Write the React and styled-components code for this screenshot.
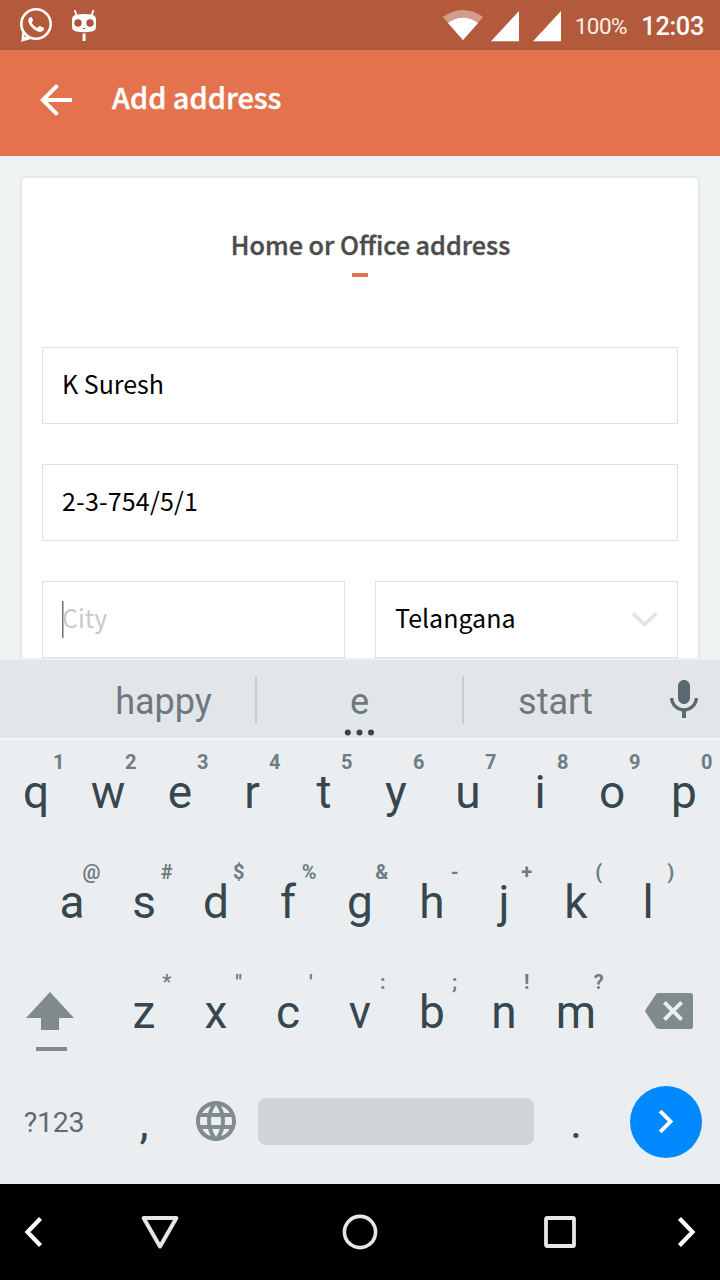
import React from "react";
import styled, { createGlobalStyle } from "styled-components";

const GlobalStyle = createGlobalStyle`
  * { box-sizing: border-box; }
  html, body { margin: 0; padding: 0; }
  body { width: 720px; height: 1280px; overflow: hidden; font-family: Roboto, sans-serif; }
  svg { display: block; flex: none; }
`;

const Screen = styled.div`
  display: flex;
  flex-direction: column;
  width: 720px;
  height: 1280px;
  overflow: hidden;
  background: #eff3f4;
`;

const StatusBar = styled.div`
  display: flex;
  align-items: center;
  justify-content: space-between;
  height: 50px;
  flex: none;
  padding: 0 16px 0 16px;
  background: #b45a3c;
  color: #fff;
`;

const StatusGroup = styled.div`
  display: flex;
  align-items: center;
  gap: ${(p) => p.$gap || 0}px;
`;

const Battery = styled.span`
  margin-left: 13px;
  font-size: 22.5px;
  line-height: 50px;
  padding-top: 1px;
  letter-spacing: -0.6px;
  color: #fbeeea;
`;

const Clock = styled.span`
  margin-left: 14.5px;
  font-size: 25.3px;
  font-weight: 500;
  line-height: 50px;
  padding-top: 3px;
  letter-spacing: -0.3px;
`;

const AppBar = styled.header`
  display: flex;
  align-items: center;
  gap: 32px;
  height: 106px;
  flex: none;
  padding: 0 32px 6px;
  background: #e3724d;
`;

const Title = styled.h1`
  margin: 0;
  padding-bottom: 9px;
  font: 500 28.9px/60px "Noto Sans CJK SC", "Source Sans Pro", sans-serif;
  -webkit-text-stroke: 0.4px currentColor;
  color: #fff;
`;

const Content = styled.main`
  height: 502px;
  flex: none;
  overflow: hidden;
  padding: 20px 20px 0;
`;

const Card = styled.section`
  height: 560px;
  padding: 0 20px;
  border: 2px solid #e4e8e9;
  border-radius: 5px;
  background: #fff;
`;

const CardHeading = styled.h2`
  margin: 0;
  padding: 44px 0 1px 21px;
  text-align: center;
  font: 500 25.2px/44px "Noto Sans CJK SC", "Source Sans Pro", sans-serif;
  -webkit-text-stroke: 0.4px currentColor;
  color: #4c4c4c;
`;

const Accent = styled.div`
  width: 16px;
  height: 4px;
  margin: 6px auto 70px;
  background: #e3724d;
`;

const Form = styled.div`
  display: grid;
  grid-template-columns: 1fr 1fr;
  gap: 40px 30px;
`;

const Field = styled.div`
  grid-column: ${(p) => (p.$half ? "auto" : "1 / -1")};
  display: flex;
  align-items: center;
  justify-content: space-between;
  height: 77px;
  padding: 0 20px 0 19px;
  border: 1px solid #dedfe0;
  background: #fff;
  font: 400 25px/70px "Noto Sans CJK SC", "Source Sans Pro", sans-serif;
  color: ${(p) => (p.$placeholder ? "#c9c9c9" : "#000")};
`;

const FieldText = styled.span`
  padding-bottom: 5px;
  letter-spacing: ${(p) => (p.$digits ? "0.17px" : "0")};
`;

const Caret = styled.i`
  width: 2px;
  height: 37px;
  margin-right: -2px;
  background: linear-gradient(90deg, #707476 50%, #b4b6b7 50%);
`;

const InputLine = styled.div`
  display: flex;
  align-items: center;
`;

const Keyboard = styled.section`
  height: 526px;
  flex: none;
  background: #ebeef1;
  color: #37474f;
`;

const Suggestions = styled.div`
  display: grid;
  grid-template-columns: 73px 184px 207px 184px 72px;
  align-items: center;
  height: 82px;
  border-top: 2px solid #edf0f2;
  border-bottom: 2px solid #f2f6f8;
  background: #e2e6e9;
`;

const Suggestion = styled.div`
  position: relative;
  height: 48px;
  margin-top: 2px;
  padding: 5px ${(p) => (p.$center ? 0 : 1)}px 0 0;
  border-right: ${(p) => (p.$last ? "0" : "2px solid #c9cdd0")};
  text-align: center;
  font-size: 36px;
  line-height: 42px;
  color: #6d797f;
`;

const More = styled.svg`
  position: absolute;
  left: 86px;
  top: 53px;
`;

const MicSlot = styled.div`
  padding: 2px 0 0 11.5px;
`;

const KeyRow = styled.div`
  display: flex;
  height: 110px;
  padding: 0 ${(p) => p.$inset || 0}px;
`;

const Key = styled.div`
  position: relative;
  width: 72px;
  text-align: center;
  font-size: 46px;
  line-height: 105px;
`;

const Hint = styled.span`
  position: absolute;
  top: 12px;
  right: 7.5px;
  min-width: 11.5px;
  text-align: center;
  font-size: 20px;
  font-weight: 700;
  line-height: 20px;
  color: #6f7c82;
`;

const SideKey = styled.div`
  width: 108px;
  padding: ${(p) => p.$pad};
`;

const BottomRow = styled.div`
  display: flex;
  align-items: center;
  height: 104px;
  padding-bottom: 1px;
`;

const SymbolsKey = styled.div`
  width: 108px;
  padding-top: 3px;
  text-align: center;
  font-size: 28.5px;
  line-height: 104px;
  letter-spacing: -0.2px;
  color: #5c6c73;
`;

const Punctuation = styled.div`
  width: ${(p) => p.$w}px;
  text-align: center;
  font-size: 46px;
  line-height: 80px;
`;

const GlobeSlot = styled.div`
  width: 78px;
  padding: 0 0 1px 11.5px;
`;

const SpaceBar = styled.div`
  width: 276px;
  height: 47px;
  border-radius: 8px;
  background: #d0d5d8;
`;

const EnterKey = styled.div`
  display: flex;
  align-items: center;
  justify-content: center;
  width: 72px;
  height: 72px;
  margin: 1px 0 0 12px;
  padding: 0 2px 2px 0;
  border-radius: 50%;
  background: #0088ff;
`;

const NavBar = styled.nav`
  height: 96px;
  flex: none;
  display: flex;
  align-items: center;
  justify-content: space-between;
  padding: 0 20px;
  background: #000;
`;

const NavMain = styled.div`
  display: flex;
  gap: 160px;
`;

const row1 = ["q1", "w2", "e3", "r4", "t5", "y6", "u7", "i8", "o9", "p0"];
const row2 = ["a@", "s#", "d$", "f%", "g&", "h-", "j+", "k(", "l)"];
const row3 = ["z*", 'x"', "c'", "v:", "b;", "n!", "m?"];

const Keys = ({ keys }) =>
  keys.map((k) => (
    <Key key={k}>
      {k[0]}
      <Hint>{k[1]}</Hint>
    </Key>
  ));

const WhatsAppIcon = () => (
  <svg width="40" height="50" viewBox="16 0 40 50">
    <circle cx="36" cy="24" r="14.7" fill="none" stroke="#fff" strokeWidth="2.6" />
    <path d="M22.4 31L21.2 41.8L31 38.9L28 36L24.9 37Z" fill="#fff" />
    <path
      fill="#fff"
      d="M31.6 17c-1-.3-3 .8-3.3 3-.3 3 2.5 6.7 5 8.7 3 2.4 6 3.6 8.3 2.9 1.8-.6 2.6-2 2.3-3.6l-3.9-2c-.6-.2-1 .1-1.6.9-.6.8-1.2.9-2 .5-2-1-3.8-2.8-4.6-4.6-.2-.6.1-.9.7-1.6.5-.6.6-1 .3-1.8z"
    />
  </svg>
);

const CyanogenIcon = () => (
  <svg width="30" height="50" viewBox="69 0 30 50">
    <path d="M74.6 10.2L76.8 15.6M93.6 10.2L91.4 15.6" stroke="#fff" strokeWidth="1.8" />
    <path d="M76.5 14.6Q84 13.2 91.5 14.6Q96 15.4 96 20V26.5Q96 31 91.5 31.6Q84 32.8 76.5 31.6Q72 31 72 26.5V20Q72 15.4 76.5 14.6Z" fill="#fff" />
    <circle cx="78" cy="23" r="3.7" fill="#a8553a" />
    <circle cx="90" cy="23" r="3.7" fill="#a8553a" />
    <path d="M82.6 28.3Q84 29.2 85.4 28.3" stroke="#b45a3c" strokeWidth="1" fill="none" />
    <path d="M82.6 33.6H85.6V41H82.6Z" fill="#fff" />
  </svg>
);

const SignalIcons = () => (
  <svg width="120" height="50" viewBox="442 0 120 50">
    <path d="M463 40L442.8 17Q463 3 483.2 17Z" fill="#fff" fillOpacity="0.4" />
    <path d="M463 40L448 23Q463 12.5 478 23Z" fill="#fff" />
    <path d="M519 11V41.3H491Z" fill="#fff" />
    <path d="M561 11V41.3H533Z" fill="#fff" />
  </svg>
);

const Glyph = ({ size = 48, color, d }) => (
  <svg width={size} height={size} viewBox="0 0 24 24" fill={color}>
    <path d={d} />
  </svg>
);

const ARROW_BACK = "M20 11H7.83l5.59-5.59L12 4l-8 8 8 8 1.41-1.41L7.83 13H20v-2z";
const MIC =
  "M12 14c1.66 0 2.99-1.34 2.99-3L15 5c0-1.66-1.34-3-3-3S9 3.34 9 5v6c0 1.66 1.34 3 3 3zm5.3-3c0 3-2.54 5.1-5.3 5.1S6.7 14 6.7 11H5c0 3.41 2.72 6.23 6 6.72V21h2v-3.28c3.28-.48 6-3.3 6-6.72h-1.7z";
const BACKSPACE =
  "M22.7 3H7c-.69 0-1.23.2-1.59.7L.3 11.4c-.3.4-.3.8 0 1.2l5.11 7.7c.36.5.9.7 1.59.7h15.7c.8 0 1.3-.5 1.3-1.3V4.3c0-.8-.5-1.3-1.3-1.3zM19 15.59L17.59 17 14 13.41 10.41 17 9 15.59 12.59 12 9 8.41 10.41 7 14 10.59 17.59 7 19 8.41 15.41 12z";
const LANGUAGE =
  "M11.99 2C6.47 2 2 6.48 2 12s4.47 10 9.99 10C17.52 22 22 17.52 22 12S17.52 2 11.99 2zm6.93 6h-2.95c-.32-1.25-.78-2.45-1.38-3.56 1.84.63 3.37 1.91 4.33 3.56zM12 4.04c.83 1.2 1.48 2.53 1.91 3.96h-3.82c.43-1.43 1.08-2.76 1.91-3.96zM4.26 14C4.1 13.36 4 12.69 4 12s.1-1.36.26-2h3.38c-.08.66-.14 1.32-.14 2 0 .68.06 1.34.14 2H4.26zm.82 2h2.95c.32 1.25.78 2.45 1.38 3.56-1.84-.63-3.37-1.9-4.33-3.56zm2.95-8H5.08c.96-1.66 2.49-2.93 4.33-3.56C8.81 5.55 8.35 6.75 8.03 8zM12 19.96c-.83-1.2-1.48-2.53-1.91-3.96h3.82c-.43 1.43-1.08 2.76-1.91 3.96zM14.34 14H9.66c-.09-.66-.16-1.32-.16-2 0-.68.07-1.35.16-2h4.68c.09.65.16 1.32.16 2 0 .68-.07 1.34-.16 2zm.25 5.56c.6-1.11 1.06-2.31 1.38-3.56h2.95c-.96 1.65-2.49 2.93-4.33 3.56zM16.36 14c.08-.66.14-1.32.14-2 0-.68-.06-1.34-.14-2h3.38c.16.64.26 1.31.26 2s-.1 1.36-.26 2h-3.38z";
const CHEVRON_RIGHT = "M10 6L8.59 7.41 13.17 12l-4.58 4.59L10 18l6-6z";

const ShiftIcon = () => (
  <svg width="50" height="62" viewBox="25 991 50 62" fill="#808b8e">
    <path d="M50 992L74 1018H59V1030H41V1018H26Z" />
    <rect x="36" y="1047" width="31" height="4" />
  </svg>
);

const NavChevron = ({ flip }) => (
  <svg width="26" height="36" viewBox="0 0 26 36">
    <path
      d={flip ? "M5.5 4.5L18.5 18L5.5 31.5" : "M20.5 4.5L7.5 18L20.5 31.5"}
      fill="none"
      stroke="#fff"
      strokeWidth="4.2"
    />
  </svg>
);

export default function App() {
  return (
    <Screen>
      <GlobalStyle />
      <StatusBar>
        <StatusGroup $gap={13}>
          <WhatsAppIcon />
          <CyanogenIcon />
        </StatusGroup>
        <StatusGroup>
          <SignalIcons />
          <Battery>100%</Battery>
          <Clock>12:03</Clock>
        </StatusGroup>
      </StatusBar>

      <AppBar>
        <Glyph color="#fff" d={ARROW_BACK} />
        <Title>Add address</Title>
      </AppBar>

      <Content>
        <Card>
          <CardHeading>Home or Office address</CardHeading>
          <Accent />
          <Form>
            <Field>
              <FieldText>K Suresh</FieldText>
            </Field>
            <Field>
              <FieldText $digits>2-3-754/5/1</FieldText>
            </Field>
            <Field $half $placeholder>
              <InputLine>
                <Caret />
                <FieldText>City</FieldText>
              </InputLine>
            </Field>
            <Field $half>
              <FieldText>Telangana</FieldText>
              <svg width="26" height="18" viewBox="0 0 26 18">
                <path d="M1.8 2.4L13.5 13.6L25.2 2.4" fill="none" stroke="#e3e4e6" strokeWidth="3.6" />
              </svg>
            </Field>
          </Form>
        </Card>
      </Content>

      <Keyboard>
        <Suggestions>
          <span />
          <Suggestion>happy</Suggestion>
          <Suggestion $center>
            e
            <More width="34" height="8" viewBox="0 0 34 8" fill="#37474f">
              <circle cx="4.8" cy="3.5" r="3" />
              <circle cx="16.5" cy="3.5" r="3" />
              <circle cx="28" cy="3.5" r="3" />
            </More>
          </Suggestion>
          <Suggestion $last>start</Suggestion>
          <MicSlot>
            <Glyph color="#5b6a71" d={MIC} />
          </MicSlot>
        </Suggestions>

        <KeyRow>
          <Keys keys={row1} />
        </KeyRow>
        <KeyRow $inset={36}>
          <Keys keys={row2} />
        </KeyRow>
        <KeyRow>
          <SideKey $pad="31px 0 0 25px">
            <ShiftIcon />
          </SideKey>
          <Keys keys={row3} />
          <SideKey $pad="27px 0 0 33px">
            <Glyph color="#808b8e" d={BACKSPACE} />
          </SideKey>
        </KeyRow>
        <BottomRow>
          <SymbolsKey>?123</SymbolsKey>
          <Punctuation $w={72}>,</Punctuation>
          <GlobeSlot>
            <Glyph color="#808b8e" d={LANGUAGE} />
          </GlobeSlot>
          <SpaceBar />
          <Punctuation $w={84}>.</Punctuation>
          <EnterKey>
            <Glyph color="#fff" d={CHEVRON_RIGHT} size={47} />
          </EnterKey>
        </BottomRow>
      </Keyboard>

      <NavBar>
        <NavChevron />
        <NavMain>
          <svg width="40" height="40" viewBox="0 0 40 40">
            <path d="M3.6 6H36.4L20 34.4Z" fill="none" stroke="#e6e6e6" strokeWidth="4" strokeLinejoin="round" />
          </svg>
          <svg width="40" height="40" viewBox="0 0 40 40">
            <circle cx="20" cy="20" r="15.6" fill="none" stroke="#e6e6e6" strokeWidth="3.6" />
          </svg>
          <svg width="40" height="40" viewBox="0 0 40 40">
            <rect x="6" y="6" width="28" height="28" rx="1" fill="none" stroke="#e6e6e6" strokeWidth="3.8" />
          </svg>
        </NavMain>
        <NavChevron flip />
      </NavBar>
    </Screen>
  );
}
